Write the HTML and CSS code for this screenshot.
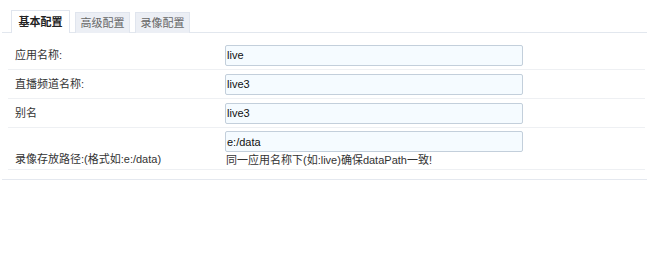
FILE: index.html
```html
<!DOCTYPE html>
<html>
<head>
    <meta name="viewport" content="width=device-width, initial-scale=1.0">
    <title>应用配置</title>
    <link rel="stylesheet" href="styles.css">
</head>
<body>
    <div class="panel">
        <ul class="tabBar">
            <li class="tab tabActive">基本配置</li>
            <li class="tab">高级配置</li>
            <li class="tab">录像配置</li>
        </ul>

        <div class="formBox">
            <div class="formRow">
                <label class="formLabel">应用名称:</label>
                <div class="formField">
                    <input type="text" class="textInput" value="live">
                </div>
            </div>
            <div class="formRow">
                <label class="formLabel">直播频道名称:</label>
                <div class="formField">
                    <input type="text" class="textInput" value="live3">
                </div>
            </div>
            <div class="formRow">
                <label class="formLabel">别名</label>
                <div class="formField">
                    <input type="text" class="textInput" value="live3">
                </div>
            </div>
            <div class="formRow formRowTall">
                <label class="formLabel labelBottom">录像存放路径:(格式如:e:/data)</label>
                <div class="formField">
                    <input type="text" class="textInput pathInput" value="e:/data">
                    <p class="hint">同一应用名称下(如:live)确保dataPath一致!</p>
                </div>
            </div>
        </div>
    </div>
</body>
</html>
```

FILE: styles.css
```css
body {
    margin: 0;
    padding: 0;
    background-color: #ffffff;
    font-family: "Liberation Sans", "Noto Sans CJK SC", sans-serif;
    font-size: 11px;
    color: #333333;
}
.panel {
    padding: 10px 0 0 2px;
}
.tabBar {
    display: flex;
    align-items: flex-end;
    gap: 5px;
    list-style: none;
    margin: 0;
    padding: 0 0 0 9px;
    border-bottom: 1px solid #e2e7ee;
    height: 22px;
}
.tab {
    box-sizing: border-box;
    width: 55px;
    height: 21px;
    line-height: 20px;
    text-align: center;
    font-size: 11px;
    color: #666666;
    background-color: #eceff5;
    border: 1px solid #e0e5ee;
    border-bottom: none;
    margin-bottom: -1px;
}
.tabActive {
    width: 59px;
    height: 23px;
    line-height: 22px;
    background-color: #ffffff;
    color: #222222;
    font-weight: bold;
}
.formBox {
    margin-top: 8px;
    padding: 0 2px 9px 6px;
    border-bottom: 1px solid #e4e8ef;
}
.formRow {
    display: flex;
    align-items: center;
    height: 28px;
    border-bottom: 1px solid #eef0f3;
}
.formRowTall {
    height: 41px;
    align-items: flex-start;
}
.formLabel {
    width: 210px;
    flex-shrink: 0;
    padding-left: 7px;
    line-height: 14px;
}
.labelBottom {
    align-self: flex-end;
    padding-bottom: 3px;
}
.formField {
    display: flex;
    flex-direction: column;
}
.textInput {
    box-sizing: border-box;
    width: 298px;
    height: 21px;
    margin: 0;
    padding: 0 0 0 1px;
    font-family: "Liberation Sans", sans-serif;
    font-size: 11px;
    color: #111111;
    background-color: #f5fbff;
    border: 1px solid #c3cfdb;
    border-radius: 2px;
}
.pathInput {
    margin-top: 3px;
}
.hint {
    margin: 1px 0 0 1px;
    line-height: 15px;
    font-size: 11px;
    color: #333333;
}
```
